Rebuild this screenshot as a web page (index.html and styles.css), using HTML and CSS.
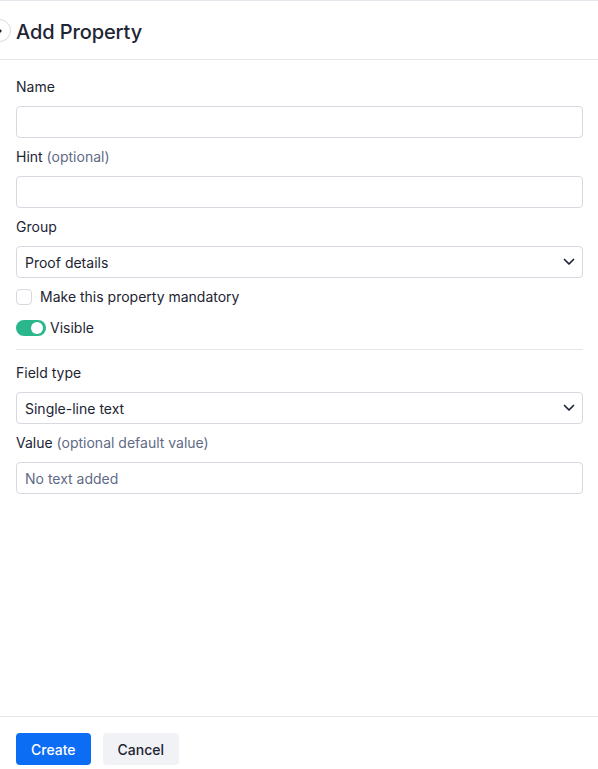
FILE: index.html
```html
<!DOCTYPE html>
<html lang="en">
<head>
<meta charset="utf-8">
<title>Add Property</title>
<link rel="stylesheet" href="styles.css">
</head>
<body>
<div class="panel">
  <header class="header">
    <button class="collapse" aria-label="Collapse">
      <svg width="8" height="8" viewBox="0 0 8 8"><path d="M2.5 1.5 5 4 2.5 6.5" fill="none" stroke="#1d2433" stroke-width="1.4" stroke-linecap="round" stroke-linejoin="round"/></svg>
    </button>
    <h1 class="title">Add Property</h1>
  </header>
  <main class="content">
    <div class="field">
      <label class="label">Name</label>
      <div class="input"></div>
    </div>
    <div class="field">
      <label class="label">Hint <span class="muted">(optional)</span></label>
      <div class="input"></div>
    </div>
    <div class="field">
      <label class="label">Group</label>
      <div class="input select"><span>Proof details</span>
        <svg class="chev" width="12" height="8" viewBox="0 0 12 8"><path d="M1.5 1.5 6 6 10.5 1.5" fill="none" stroke="#1d2433" stroke-width="1.7" stroke-linecap="round" stroke-linejoin="round"/></svg>
      </div>
    </div>
    <div class="check-row">
      <span class="checkbox"></span>
      <span>Make this property mandatory</span>
    </div>
    <div class="toggle-row">
      <span class="toggle"><span class="knob"></span></span>
      <span>Visible</span>
    </div>
    <hr class="divider">
    <div class="field">
      <label class="label">Field type</label>
      <div class="input select"><span>Single-line text</span>
        <svg class="chev" width="12" height="8" viewBox="0 0 12 8"><path d="M1.5 1.5 6 6 10.5 1.5" fill="none" stroke="#1d2433" stroke-width="1.7" stroke-linecap="round" stroke-linejoin="round"/></svg>
      </div>
    </div>
    <div class="field">
      <label class="label">Value <span class="muted">(optional default value)</span></label>
      <div class="input"><span class="placeholder">No text added</span></div>
    </div>
  </main>
  <footer class="footer">
    <button class="btn primary">Create</button>
    <button class="btn secondary">Cancel</button>
  </footer>
</div>
</body>
</html>
```
FILE: styles.css
```css
html, body {
  margin: 0;
  padding: 0;
  overflow: hidden;
  background: #ffffff;
}
body {
  font-family: Inter, "Noto Sans", sans-serif;
  font-size: 14px;
  color: #1d2433;
}
.panel {
  height: 781px;
  display: flex;
  flex-direction: column;
  border-top: 1px solid #e3e6eb;
  box-sizing: border-box;
}
.header {
  position: relative;
  height: 58px;
  border-bottom: 1px solid #e3e6eb;
  display: flex;
  align-items: center;
  padding: 0 16px;
}
.collapse {
  position: absolute;
  left: -12px;
  top: 18px;
  width: 23px;
  height: 23px;
  border-radius: 50%;
  border: 1px solid #d6d9e0;
  background: #fff;
  padding: 0 0 0 7px;
  display: flex;
  align-items: center;
  justify-content: flex-start;
  box-sizing: border-box;
}
.title {
  margin: 0;
  font-size: 20px;
  font-weight: 500;
  letter-spacing: -0.1px;
  color: #1d2433;
  padding-top: 4px;
}
.content {
  flex: 1;
  padding: 16px 15px 0 16px;
  display: flex;
  flex-direction: column;
}
.field {
  display: flex;
  flex-direction: column;
}
.field + .field { margin-top: 8px; }
.label {
  line-height: 22px;
  margin-bottom: 8px;
  color: #1d2433;
}
.muted { color: #5f6b85; }
.input {
  height: 32px;
  border: 1px solid #d6d9e0;
  border-radius: 4px;
  box-sizing: border-box;
  display: flex;
  align-items: center;
  padding: 0 8px;
  color: #1d2433;
}
.select { justify-content: space-between; padding-right: 7px; }
.chev { display: block; }
.placeholder { color: #5f6b85; }
.check-row, .toggle-row {
  display: flex;
  align-items: center;
  line-height: 22px;
}
.check-row { margin-top: 8px; gap: 8px; }
.checkbox {
  width: 16px;
  height: 16px;
  border: 1px solid #d6d9e0;
  border-radius: 4px;
  box-sizing: border-box;
}
.toggle-row { margin-top: 9px; gap: 4px; }
.toggle {
  width: 30px;
  height: 16px;
  border-radius: 8px;
  background: #2cb68c;
  position: relative;
}
.knob {
  position: absolute;
  right: 3px;
  top: 2px;
  width: 12px;
  height: 12px;
  border-radius: 50%;
  background: #fff;
}
.divider {
  border: 0;
  border-top: 1px solid #e3e6eb;
  margin: 10px 0 12px;
  height: 0;
}
.footer {
  border-top: 1px solid #e3e6eb;
  padding: 16px;
  display: flex;
  gap: 12px;
}
.btn {
  height: 32px;
  border: 0;
  border-radius: 4px;
  font-family: Inter, "Noto Sans", sans-serif;
  font-size: 14px;
  font-weight: 500;
  padding: 0 15px;
}
.primary { background: #0b6cf4; color: #fff; }
.secondary { background: #f1f2f5; color: #1d2433; }
```
